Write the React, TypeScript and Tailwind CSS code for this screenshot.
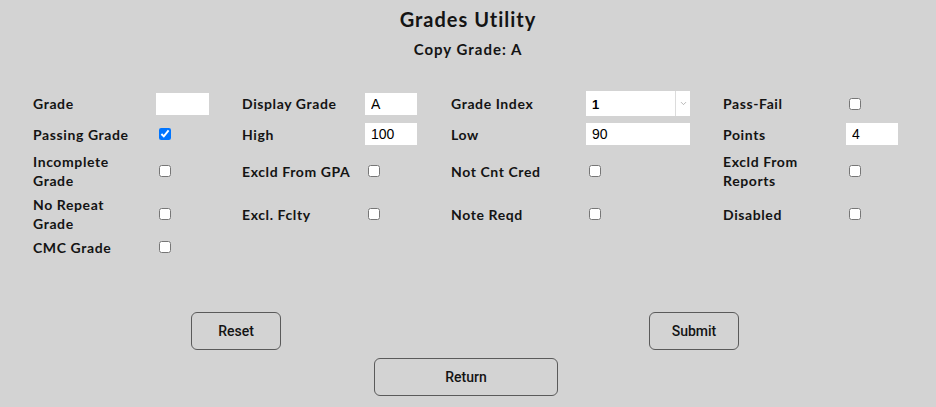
import { ChevronDown } from "lucide-react";

const labelCls =
  "font-['Lato','Noto_Sans',sans-serif] font-bold text-[14px] tracking-[0.6px] leading-[19px] text-[#141414] flex items-center";

function Label({ children }: { children: React.ReactNode }) {
  return <div className={labelCls}>{children}</div>;
}

function TextBox({ value, w = "w-[53px]" }: { value: string; w?: string }) {
  return (
    <div className="flex items-center">
      <input
        defaultValue={value}
        className={`${w} h-[22px] bg-white px-[6px] text-[14px] text-black font-['Liberation_Sans',Arial,sans-serif] outline-none`}
      />
    </div>
  );
}

function Check({ checked = false }: { checked?: boolean }) {
  return (
    <div className="flex items-center">
      <input type="checkbox" defaultChecked={checked} className="ml-[3px] w-[12px] h-[12px]" />
    </div>
  );
}

export default function App() {
  return (
    <div className="min-h-[407px] w-full bg-[#d3d3d3] flex flex-col">
      <h1 className="mt-[5px] text-center font-['Lato','Noto_Sans',sans-serif] font-bold text-[20px] tracking-[1px] leading-[28px] text-[#141414]">
        Grades Utility
      </h1>
      <h2 className="mt-[6px] text-center font-['Lato','Noto_Sans',sans-serif] font-bold text-[15px] tracking-[1px] leading-[20px] text-[#141414]">
        Copy Grade: A
      </h2>

      <div className="mt-[31px] ml-[33px] grid grid-cols-[123px_86px_123px_86px_135px_137px_123px_60px] grid-rows-[27px_28px_40px_40px_20px] gap-y-[3px]">
        {/* row 1 */}
        <Label>Grade</Label>
        <TextBox value="" />
        <Label>Display Grade</Label>
        <TextBox value="A" w="w-[52px]" />
        <Label>Grade Index</Label>
        <div className="flex items-center">
          <div className="relative w-[104px] h-[25px] bg-white">
            <select
              defaultValue="1"
              className="appearance-none w-full h-full bg-transparent pl-[6px] pr-[18px] text-[13px] font-bold text-black font-['Liberation_Sans',Arial,sans-serif] outline-none"
            >
              <option value="1">1</option>
              <option value="2">2</option>
            </select>
            <div className="pointer-events-none absolute right-0 top-0 h-full w-[15px] border-l border-[#dcdcdc] flex items-center justify-center">
              <ChevronDown size={9} className="text-[#a0a0a0]" strokeWidth={2} />
            </div>
          </div>
        </div>
        <Label>Pass-Fail</Label>
        <Check />

        {/* row 2 */}
        <Label>Passing Grade</Label>
        <Check checked />
        <Label>High</Label>
        <TextBox value="100" w="w-[52px]" />
        <Label>Low</Label>
        <TextBox value="90" w="w-[104px]" />
        <Label>Points</Label>
        <TextBox value="4" w="w-[52px]" />

        {/* row 3 */}
        <Label>
          Incomplete
          <br />
          Grade
        </Label>
        <Check />
        <Label>Excld From GPA</Label>
        <Check />
        <Label>Not Cnt Cred</Label>
        <Check />
        <Label>
          Excld From
          <br />
          Reports
        </Label>
        <Check />

        {/* row 4 */}
        <Label>
          No Repeat
          <br />
          Grade
        </Label>
        <Check />
        <Label>Excl. Fclty</Label>
        <Check />
        <Label>Note Reqd</Label>
        <Check />
        <Label>Disabled</Label>
        <Check />

        {/* row 5 */}
        <Label>CMC Grade</Label>
        <Check />
      </div>

      <div className="mt-[55px] flex pl-[191px]">
        <button className="w-[90px] h-[38px] rounded-[6px] border border-[#5a5a5a] bg-transparent font-['Roboto',sans-serif] font-medium text-[14px] text-[#141414]">
          Reset
        </button>
        <button className="ml-[368px] w-[90px] h-[38px] rounded-[6px] border border-[#5a5a5a] bg-transparent font-['Roboto',sans-serif] font-medium text-[14px] text-[#141414]">
          Submit
        </button>
      </div>
      <div className="mt-[8px] flex pl-[374px]">
        <button className="w-[184px] h-[38px] rounded-[6px] border border-[#5a5a5a] bg-transparent font-['Roboto',sans-serif] font-medium text-[14px] text-[#141414]">
          Return
        </button>
      </div>
    </div>
  );
}
